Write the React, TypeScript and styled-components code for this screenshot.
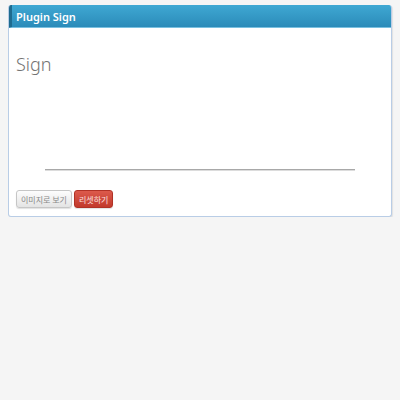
import React from "react";
import styled, { createGlobalStyle } from "styled-components";

const Global = createGlobalStyle`
  html, body { margin: 0; padding: 0; background: #f5f5f5; }
  body { font-family: "Noto Sans", "Noto Sans CJK KR", sans-serif; }
`;

const Page = styled.div`
  padding: 5px 8px 0 8px;
`;

const Panel = styled.div`
  width: 384px;
  box-sizing: border-box;
  background: #fff;
  border: 1px solid #b9cde6;
  border-top: none;
  border-radius: 3px;
  box-shadow: 1px 1px 1px rgba(0,0,0,0.08);
  overflow: hidden;
`;

const Header = styled.div`
  height: 23px;
  box-sizing: border-box;
  display: flex;
  align-items: center;
  padding-left: 4px;
  margin: 0 -1px;
  background: linear-gradient(#3fa8d3, #2b8bb9);
  border-left: 4px solid #1e6b8f;
  border-bottom: 1px solid #79c0e0;
  color: #fff;
  font-size: 11px;
  font-weight: 600;
`;

const Body = styled.div`
  padding: 24px 7px 8px 7px;
`;

const Title = styled.h2`
  margin: 0;
  font-weight: 300;
  font-size: 18px;
  line-height: 24px;
  color: #737373;
`;

const SignArea = styled.div`
  height: 94px;
  display: flex;
  align-items: flex-end;
  justify-content: center;
`;

const SignLine = styled.div`
  width: 310px;
  height: 1px;
  background: #a8a8a8;
  box-shadow: 0 1px 0 #dcdcdc;
`;

const Buttons = styled.div`
  display: flex;
  gap: 2px;
  margin-top: 20px;
`;

const Button = styled.button<{ $variant?: "default" | "danger" }>`
  height: 18px;
  padding: 0 4px;
  font-family: "Noto Sans CJK KR", sans-serif;
  font-size: 8px;
  border-radius: 3px;
  cursor: pointer;
  box-shadow: 0 1px 1px rgba(0,0,0,0.12);
  ${(p) =>
    p.$variant === "danger"
      ? `
    background: linear-gradient(#dc5a4c, #c2392c);
    border: 1px solid #b03226;
    color: #fbe3e0;
  `
      : `
    background: linear-gradient(#fdfdfd, #e4e4e4);
    border: 1px solid #c6c6c6;
    color: #888;
  `}
`;

export default function App() {
  return (
    <>
      <Global />
      <Page>
        <Panel>
          <Header>Plugin Sign</Header>
          <Body>
            <Title>Sign</Title>
            <SignArea>
              <SignLine />
            </SignArea>
            <Buttons>
              <Button>이미지로 보기</Button>
              <Button $variant="danger">리셋하기</Button>
            </Buttons>
          </Body>
        </Panel>
      </Page>
    </>
  );
}
